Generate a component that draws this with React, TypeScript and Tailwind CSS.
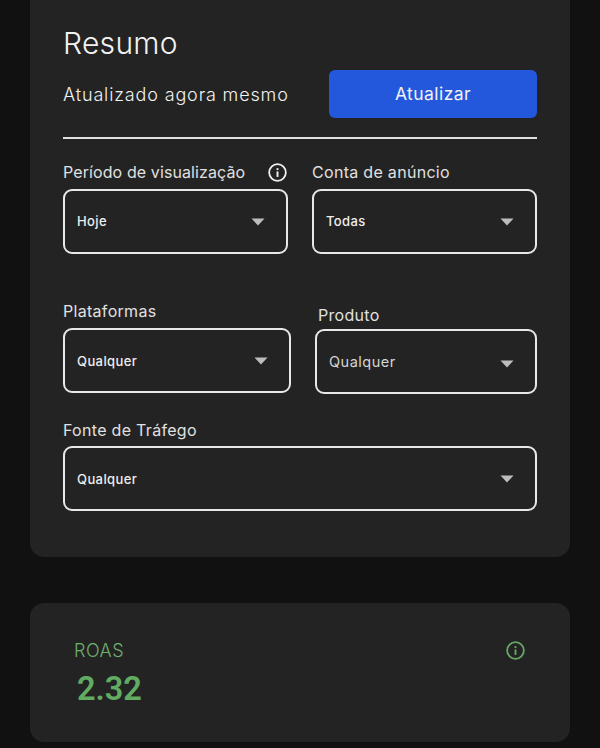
import React from "react";

const fontClass = "font-['Inter','Noto_Sans',sans-serif]";

function InfoIcon({ className }: { className: string }) {
  return (
    <svg className={className} viewBox="0 0 18 18" fill="none">
      <circle cx="9" cy="9" r="7.9" stroke="currentColor" strokeWidth="1.7" />
      <rect x="8.1" y="8" width="1.8" height="5.2" fill="currentColor" />
      <rect x="8.1" y="4.9" width="1.8" height="1.8" fill="currentColor" />
    </svg>
  );
}

function Caret() {
  return (
    <svg className="w-[14px] h-[8px] shrink-0" viewBox="0 0 14 8">
      <path d="M0.5 0.5H13.5L7 7.5Z" fill="#bdbdbd" />
    </svg>
  );
}

function Select({ value, light, low, caretClass }: { value: string; light?: boolean; low?: boolean; caretClass?: string }) {
  return (
    <div className="flex h-[65px] items-center justify-between rounded-[9px] border-2 border-[#e8e8e8] pl-[12px] pr-[21px]">
      <span
        className={
          light
            ? "text-[14.5px] tracking-[0.5px] text-[#d4d4d4]"
            : `text-[13px] font-medium tracking-[0.4px] text-[#eeeeee] ${low ? "mt-[2px]" : ""}`
        }
      >
        {value}
      </span>
      <span className={caretClass}>
        <Caret />
      </span>
    </div>
  );
}

function Label({ text, tight }: { text: string; tight?: boolean }) {
  return (
    <div className={`text-[16px] leading-[20px] text-[#e0e0e0] ${tight ? "tracking-[0.1px]" : "tracking-[0.3px]"}`}>
      {text}
    </div>
  );
}

export default function App() {
  return (
    <div className={`h-[748px] overflow-hidden bg-[#111111] px-[30px] ${fontClass}`}>
      <div className="h-[557px] rounded-b-[14px] bg-[#232323] px-[33px] pt-[24px]">
        <h1 className="text-[30px] font-light leading-[38px] tracking-[0.3px] text-[#f2f2f2]">Resumo</h1>

        <div className="mt-[8px] flex items-center justify-between">
          <span className="text-[18px] font-light tracking-[0.85px] text-[#f2f2f2]">Atualizado agora mesmo</span>
          <button className="h-[48px] w-[208px] rounded-[6px] bg-[#2458dc] text-[17.5px] tracking-[0.45px] text-[#f2f2f2]">
            Atualizar
          </button>
        </div>

        <div className="mt-[19px] h-[2px] bg-[#e0e0e0]" />

        <div className="mt-[23px] grid grid-cols-2 gap-x-[24px]">
          <div>
            <div className="flex items-center justify-between pb-[7px] pr-[1px]">
              <Label text="Período de visualização" tight />
              <InfoIcon className="h-[19px] w-[19px] text-[#f0f0f0]" />
            </div>
            <Select value="Hoje" />
          </div>
          <div>
            <div className="pb-[7px]">
              <Label text="Conta de anúncio" />
            </div>
            <Select value="Todas" />
          </div>
        </div>

        <div className="mt-[47px] flex">
          <div className="w-[228px] shrink-0">
            <div className="pb-[7px]">
              <Label text="Plataformas" />
            </div>
            <Select value="Qualquer" low />
          </div>
          <div className="ml-[24px] flex-1 pt-[4px]">
            <div className="pb-[4px] pl-[3px]">
              <Label text="Produto" />
            </div>
            <Select value="Qualquer" light caretClass="mt-[5px]" />
          </div>
        </div>

        <div className="mt-[26px] pb-[6px]">
          <Label text="Fonte de Tráfego" />
        </div>
        <Select value="Qualquer" low />
      </div>

      <div className="mt-[46px] h-[139px] rounded-[14px] bg-[#232323] pl-[44px] pr-[45px] pt-[35px]">
        <div className="flex items-center justify-between">
          <span className="mt-[1px] text-[18px] font-light leading-[24px] tracking-[0.5px] text-[#6fb06f]">ROAS</span>
          <InfoIcon className="h-[19px] w-[19px] text-[#66a866]" />
        </div>
        <div className="mt-[5px] pl-[3px] font-['Roboto',sans-serif] text-[32.5px] font-semibold leading-[42px] text-[#62ab62]">
          2.32
        </div>
      </div>
    </div>
  );
}
